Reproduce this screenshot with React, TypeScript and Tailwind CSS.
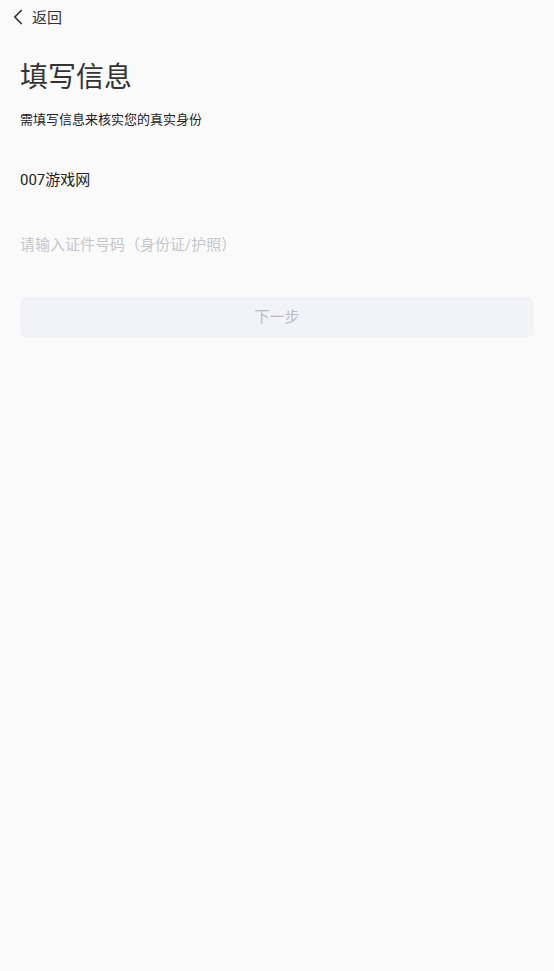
import { ChevronLeft } from 'lucide-react';

export default function App() {
  return (
    <div
      className="min-h-[971px] w-full bg-[#fafafa] text-[#333]"
      style={{ fontFamily: 'Roboto, "Noto Sans CJK SC", sans-serif' }}
    >
      {/* Top bar */}
      <div className="flex h-[36px] items-center pl-[5px]">
        <ChevronLeft size={26} strokeWidth={1.6} className="-mt-[2px] text-[#333]" />
        <span className="ml-[1px] text-[15px] text-[#333]">返回</span>
      </div>

      <div className="px-[20px]">
        <h1 className="mt-[22px] text-[28px] leading-[40px] font-normal text-[#333]">填写信息</h1>
        <p className="mt-[12px] text-[13px] leading-[20px] text-[#222]">需填写信息来核实您的真实身份</p>

        <div className="mt-[39px] text-[15px] leading-[22px] text-[#222]">007游戏网</div>

        <input
          type="text"
          placeholder="请输入证件号码（身份证/护照）"
          className="mt-[42px] block h-[24px] w-full bg-transparent text-[15px] text-[#222] outline-none placeholder:text-[#c4c6cc]"
        />

        <button className="mt-[40px] flex h-[41px] w-full items-center justify-center rounded-[8px] bg-[#f2f3f7] text-[15px] text-[#bcbcc0]">
          下一步
        </button>
      </div>
    </div>
  );
}
